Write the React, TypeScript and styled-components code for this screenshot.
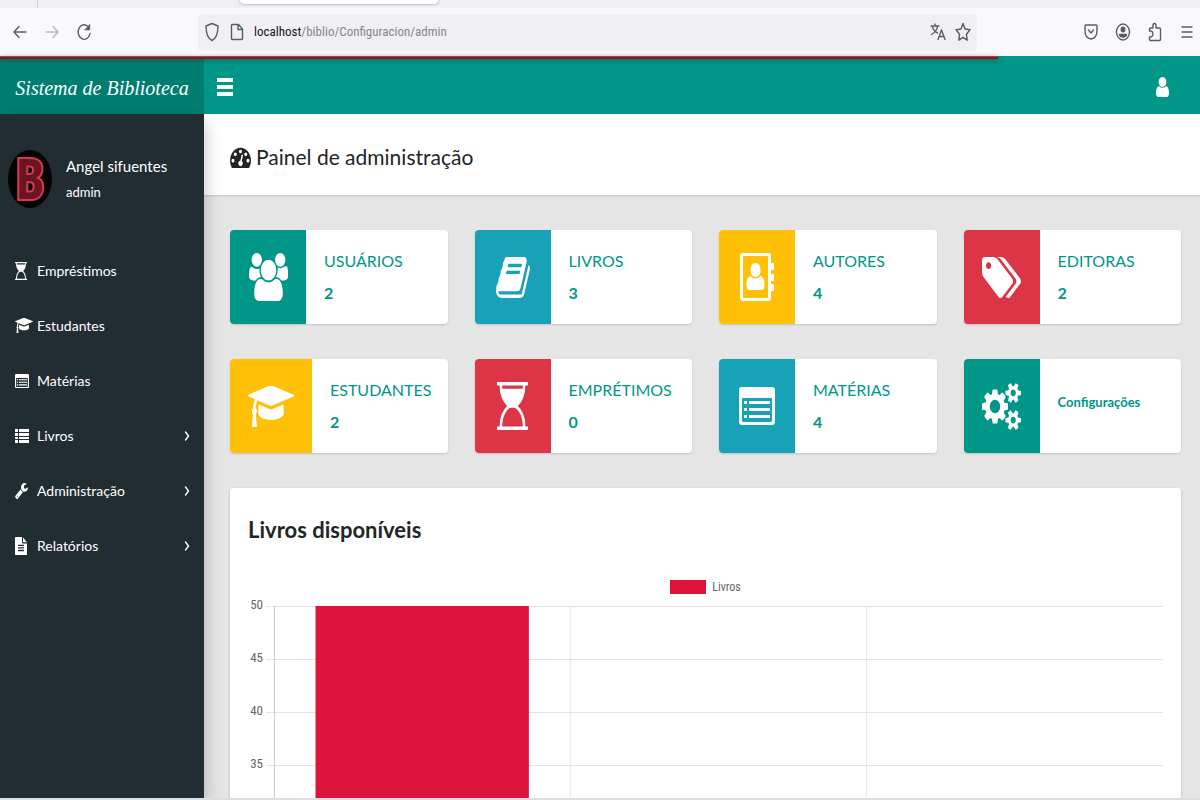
import React from 'react';
import styled, { createGlobalStyle } from 'styled-components';

const teal = '#009688';
const cyan = '#17a2b8';
const amber = '#ffc107';
const red = '#dc3545';
const crimson = '#dc143c';
const condensed = '"Roboto Condensed", "Liberation Sans", sans-serif';

const GlobalStyle = createGlobalStyle`
  *, *::before, *::after { box-sizing: border-box; }
  body { margin: 0; font-family: Lato, "Open Sans", sans-serif; color: #212529; background: #e5e5e5; }
  h1, h2, h3, p, ul { margin: 0; padding: 0; }
  ul { list-style: none; }
  a { color: inherit; text-decoration: none; }
  button { border: 0; padding: 0; background: none; color: inherit; font: inherit; cursor: pointer; }
  svg { display: block; flex: none; }
`;

const Window = styled.div`
  display: flex;
  flex-direction: column;
  height: 100vh;
  overflow: hidden;
  border-bottom: 2px solid #dcdee3;
`;

/* Browser chrome */

const TabStrip = styled.div`
  display: flex;
  flex: none;
  height: 8px;
  background: #f0f0f4;
`;

const TabDivider = styled.div`
  width: 38px;
  border-right: 1px solid #cfcfd8;
`;

const ActiveTab = styled.div`
  width: 198px;
  height: 4px;
  margin-left: 202px;
  background: #fff;
  border-radius: 0 0 4px 4px;
  box-shadow: 0 0 3px rgba(0, 0, 0, 0.4);
`;

const Toolbar = styled.div`
  display: flex;
  flex: none;
  align-items: center;
  height: 48px;
  padding: 0 5px 0 12px;
  background: #f9f9fb;
  color: #5b5b66;
`;

const ToolGroup = styled.div`
  display: flex;
  align-items: center;
  gap: 16px;
`;

const ToolButton = styled.button<{ $dim?: boolean }>`
  display: grid;
  place-items: center;
  width: 16px;
  height: 24px;
  opacity: ${p => (p.$dim ? 0.4 : 1)};
`;

const AddressBar = styled.div`
  display: flex;
  flex: 1;
  align-items: center;
  gap: 9px;
  height: 37px;
  margin: 0 106px;
  padding: 0 6px;
  border-radius: 4px;
  background: #f0f0f4;
`;

const Address = styled.div`
  flex: 1;
  font: 13px/20px ${condensed};
  color: #85858f;
  outline: none;
  b { font-weight: 400; color: #15141a; }
`;

/* Application shell */

const Page = styled.div`
  position: relative;
  display: grid;
  flex: 1;
  min-height: 0;
  grid-template-columns: 204px minmax(0, 1fr);
  grid-template-rows: 58px minmax(0, 1fr);
`;

const LoadBar = styled.div`
  position: absolute;
  z-index: 3;
  top: 0;
  left: 0;
  width: 998px;
  max-width: 100%;
  height: 3px;
  border-top: 1px solid #a8434a;
  background: #7d1d26;
  box-shadow: 0 1px 4px rgba(70, 30, 30, 0.5);
`;

const Brand = styled.a`
  display: flex;
  align-items: center;
  justify-content: center;
  padding-top: 6px;
  background: #007d71;
  color: #fff;
  font: italic 20px/32px "Liberation Serif", serif;
  white-space: nowrap;
`;

const TopBar = styled.header`
  display: flex;
  align-items: center;
  justify-content: space-between;
  padding: 4px 31px 0 13px;
  background: ${teal};
  color: #fff;
`;

const Sidebar = styled.aside`
  z-index: 2;
  padding-top: 33px;
  background: #222d32;
  color: #fff;
  box-shadow: 0 8px 17px rgba(0, 0, 0, 0.25);
`;

const Profile = styled.div`
  display: flex;
  align-items: center;
  gap: 14px;
  height: 64px;
  margin-bottom: 32px;
  padding-left: 8px;
`;

const ProfileName = styled.p`
  font-size: 15px;
  line-height: 26px;
`;

const ProfileRole = styled.p`
  font-size: 13px;
  line-height: 26px;
`;

const NavLink = styled.a`
  display: flex;
  align-items: center;
  height: 55px;
  padding: 0 14px 0 15px;
  font-size: 14px;
  line-height: 20px;
`;

const NavIcon = styled.span`
  display: flex;
  width: 22px;
`;

const NavLabel = styled.span`
  flex: 1;
`;

const Main = styled.main`
  overflow: hidden;
  background: #e5e5e5;
`;

const TitleBar = styled.div`
  display: flex;
  align-items: center;
  gap: 5px;
  height: 81px;
  padding: 4px 26px 0;
  background: #fff;
  box-shadow: 0 1px 2px rgba(0, 0, 0, 0.15);
`;

const Title = styled.h1`
  font-size: 21px;
  font-weight: 400;
  line-height: 32px;
`;

const Content = styled.div`
  display: flex;
  flex-direction: column;
  gap: 35px;
  padding: 35px 19px 35px 26px;
`;

const Cards = styled.div`
  display: grid;
  grid-template-columns: repeat(4, minmax(0, 1fr));
  gap: 35px 27px;
`;

const Card = styled.a`
  display: flex;
  height: 94px;
  overflow: hidden;
  border-radius: 4px;
  background: #fff;
  color: ${teal};
  box-shadow: 0 1px 2px rgba(0, 0, 0, 0.15);
`;

const CardIcon = styled.div<{ $tone: string }>`
  display: grid;
  flex: none;
  place-items: center;
  min-width: 76px;
  padding: 0 18px;
  background: ${p => p.$tone};
  color: #fff;
`;

const CardInfo = styled.div`
  display: flex;
  flex-direction: column;
  justify-content: center;
  padding-left: 18px;
`;

const CardTitle = styled.h3`
  font-size: 16px;
  font-weight: 400;
  line-height: 32px;
`;

const CardValue = styled.p<{ $small?: boolean }>`
  padding-bottom: ${p => (p.$small ? 8 : 0)}px;
  font-size: ${p => (p.$small ? 13 : 16)}px;
  font-weight: 700;
  line-height: 32px;
`;

const Tile = styled.section`
  padding: 24px 18px;
  border-radius: 3px;
  background: #fff;
  box-shadow: 0 1px 3px rgba(0, 0, 0, 0.2);
`;

const TileTitle = styled.h2`
  font-size: 22px;
  font-weight: 700;
  line-height: 36px;
`;

const Legend = styled.div`
  display: flex;
  align-items: center;
  justify-content: center;
  gap: 6px;
  height: 16px;
  margin-top: 31px;
  color: #666;
  font: 12px/16px ${condensed};
`;

const Swatch = styled.span`
  width: 36px;
  height: 14px;
  background: ${crimson};
`;

const Plot = styled.div`
  display: flex;
`;

const Axis = styled.div`
  width: 15px;
  color: #666;
  font: 13px/20px ${condensed};
  text-align: right;
`;

const Tick = styled.div`
  height: 53px;
`;

const Graph = styled.svg`
  flex: 1;
  min-width: 0;
  height: 224px;
  margin-left: 3px;
`;

/* Icons */

type GlyphProps = { w: number; h: number; box: string; d: string; evenOdd?: boolean };

const Glyph = ({ w, h, box, d, evenOdd }: GlyphProps) => (
  <svg width={w} height={h} viewBox={box} preserveAspectRatio="none" fill="currentColor" aria-hidden="true">
    <path d={d} fillRule={evenOdd ? 'evenodd' : 'nonzero'} />
  </svg>
);

const paths = {
  users:
    'M657 896q-162 5-265 128h-134q-82 0-138-40.5t-56-118.5q0-353 124-353 6 0 43.5 21t97.5 42.5 119 21.5q67 0 133-23-5 37-5 66 0 159 81 256zm1071 637q0 120-73 189.5t-194 69.5h-874q-121 0-194-69.5t-73-189.5q0-53 3.5-103.5t14-109 26.5-108.5 43-97.5 62-81 85.5-53.5 111.5-20q10 0 43 21.5t73 48 107 48 135 21.5 135-21.5 107-48 73-48 43-21.5q61 0 111.5 20t85.5 53.5 62 81 43 97.5 26.5 108.5 14 109 3.5 103.5zm-1024-1277q0 106-75 181t-181 75-181-75-75-181 75-181 181-75 181 75 75 181zm704 384q0 159-112.5 271.5t-271.5 112.5-271.5-112.5-112.5-271.5 112.5-271.5 271.5-112.5 271.5 112.5 112.5 271.5zm576 225q0 78-56 118.5t-138 40.5h-134q-103-123-265-128 93-128 93-287 0-29-5-66 66 23 133 23 59 0 119-21.5t97.5-42.5 43.5-21q124 0 124 353zm-128-609q0 106-75 181t-181 75-181-75-75-181 75-181 181-75 181 75 75 181z',
  book:
    'M1703 478q40 57 18 129l-275 906q-19 64-76.5 107.5t-122.5 43.5h-923q-77 0-148.5-53.5t-99.5-131.5q-24-67-2-127 0-4 3-27t4-37q1-8-3-21.5t-3-19.5q2-11 8-21t16.5-23.5 16.5-23.5q23-38 45-91.5t30-91.5q3-10 .5-30t-.5-28q3-11 17-28t17-23q21-36 42-92t25-90q1-9-2.5-32t.5-28q4-13 22-30.5t22-22.5q19-26 42.5-84.5t27.5-96.5q1-8-3-25.5t-2-26.5q2-8 9-18t18-23 17-21q8-12 16.5-30.5t15-35 16-36 19.5-32 26.5-23.5 36-11.5 47.5 5.5l-1 3q38-9 51-9h761q74 0 114 56t18 130l-274 906q-36 119-71.5 153.5t-128.5 34.5h-869q-27 0-38 15-11 16-1 43 24 70 144 70h923q29 0 56-15.5t35-41.5l300-987q7-22 5-57 38 15 59 43zm-1064 2q-4 13 2 22.5t20 9.5h608q13 0 25.5-9.5t16.5-22.5l21-64q4-13-2-22.5t-20-9.5h-608q-13 0-25.5 9.5t-16.5 22.5zm-83 256q-4 13 2 22.5t20 9.5h608q13 0 25.5-9.5t16.5-22.5l21-64q4-13-2-22.5t-20-9.5h-608q-13 0-25.5 9.5t-16.5 22.5z',
  tags:
    'M576 448q0-53-37.5-90.5t-90.5-37.5-90.5 37.5-37.5 90.5 37.5 90.5 90.5 37.5 90.5-37.5 37.5-90.5zm1067 576q0 53-37 90l-491 492q-39 37-91 37-53 0-90-37l-715-716q-38-37-64.5-101t-26.5-117v-416q0-52 38-90t90-38h416q53 0 117 26.5t102 64.5l715 714q37 39 37 91zm384 0q0 53-37 90l-491 492q-39 37-91 37-36 0-59-14t-53-45l470-470q37-37 37-90 0-52-37-91l-715-714q-38-38-102-64.5t-117-26.5h224q53 0 117 26.5t102 64.5l715 714q37 39 37 91z',
  cap:
    'M1774 836l18 316q4 69-82 128t-235 93.5-323 34.5-323-34.5-235-93.5-82-128l18-316 574 181q22 7 48 7t48-7zm530-324q0 23-22 31l-1120 352q-4 1-10 1t-10-1l-652-206q-43 34-71 111.5t-34 178.5q63 36 63 109 0 69-58 107l58 433q2 14-8 25-9 11-24 11h-192q-15 0-24-11-10-11-8-25l58-433q-58-38-58-107 0-73 65-111 11-207 98-330l-333-104q-22-8-22-31t22-31l1120-352q4-1 10-1t10 1l1120 352q22 8 22 31z',
  hourglass:
    'M1408 128q0 261-106.5 461.5t-266.5 306.5q160 106 266.5 306.5t106.5 461.5h96q14 0 23 9t9 23v64q0 14-9 23t-23 9h-1472q-14 0-23-9t-9-23v-64q0-14 9-23t23-9h96q0-261 106.5-461.5t266.5-306.5q-160-106-266.5-306.5t-106.5-461.5h-96q-14 0-23-9t-9-23v-64q0-14 9-23t23-9h1472q14 0 23 9t9 23v64q0 14-9 23t-23 9h-96zm-128 0h-1024q0 66 9 128h1006q9-61 9-128zm0 1536q0-130-34-249.5t-90.5-208-126.5-152-146-94.5h-230q-76 31-146 94.5t-126.5 152-90.5 208-34 249.5h1024z',
  cogs:
    'M896 896q0-106-75-181t-181-75-181 75-75 181 75 181 181 75 181-75 75-181zm768 512q0-52-38-90t-90-38-90 38-38 90q0 53 37.5 90.5t90.5 37.5 90.5-37.5 37.5-90.5zm0-1024q0-52-38-90t-90-38-90 38-38 90q0 53 37.5 90.5t90.5 37.5 90.5-37.5 37.5-90.5zm-384 421v185q0 10-7 19.5t-16 10.5l-155 24q-11 35-32 76 34 48 90 115 7 11 7 20 0 12-7 19-23 30-82.5 89.5t-78.5 59.5q-11 0-21-7l-115-90q-37 19-77 31-11 108-23 155-7 24-30 24h-186q-11 0-20-7.5t-10-17.5l-23-153q-34-10-75-31l-118 89q-7 7-20 7-11 0-21-8-144-133-144-160 0-9 7-19 10-14 41-53t47-61q-23-44-35-82l-152-24q-10-1-17-9.5t-7-19.5v-185q0-10 7-19.5t16-10.5l155-24q11-35 32-76-34-48-90-115-7-11-7-20 0-12 7-20 22-30 82-89t79-59q11 0 21 7l115 90q34-18 77-32 11-108 23-154 7-24 30-24h186q11 0 20 7.5t10 17.5l23 153q34 10 75 31l118-89q8-7 20-7 11 0 21 8 144 133 144 160 0 8-7 19-12 16-42 54t-45 60q23 48 34 82l152 23q10 2 17 10.5t7 19.5zm640 533v140q0 16-149 31-12 27-30 52 51 113 51 138 0 4-4 7-122 71-124 71-8 0-46-47t-52-68q-20 2-30 2t-30-2q-14 21-52 68t-46 47q-2 0-124-71-4-3-4-7 0-25 51-138-18-25-30-52-149-15-149-31v-140q0-16 149-31 13-29 30-52-51-113-51-138 0-4 4-7 4-2 35-20t59-34 30-16q8 0 46 46.5t52 67.5q20-2 30-2t30 2q51-71 92-112l6-2q4 0 124 70 4 3 4 7 0 25-51 138 17 23 30 52 149 15 149 31zm0-1024v140q0 16-149 31-12 27-30 52 51 113 51 138 0 4-4 7-122 71-124 71-8 0-46-47t-52-68q-20 2-30 2t-30-2q-14 21-52 68t-46 47q-2 0-124-71-4-3-4-7 0-25 51-138-18-25-30-52-149-15-149-31v-140q0-16 149-31 13-29 30-52-51-113-51-138 0-4 4-7 4-2 35-20t59-34 30-16q8 0 46 46.5t52 67.5q20-2 30-2t30 2q51-71 92-112l6-2q4 0 124 70 4 3 4 7 0 25-51 138 17 23 30 52 149 15 149 31z',
  user:
    'M1536 1399q0 109-62.5 187t-150.5 78h-854q-88 0-150.5-78t-62.5-187q0-85 8.5-160.5t31.5-152 58.5-131 94-89 134.5-34.5q131 128 313 128t313-128q76 0 134.5 34.5t94 89 58.5 131 31.5 152 8.5 160.5zm-256-887q0 159-112.5 271.5t-271.5 112.5-271.5-112.5-112.5-271.5 112.5-271.5 271.5-112.5 271.5 112.5 112.5 271.5z',
  gauge:
    'M384 1152q0-53-37.5-90.5t-90.5-37.5-90.5 37.5-37.5 90.5 37.5 90.5 90.5 37.5 90.5-37.5 37.5-90.5zm192-448q0-53-37.5-90.5t-90.5-37.5-90.5 37.5-37.5 90.5 37.5 90.5 90.5 37.5 90.5-37.5 37.5-90.5zm428 481l101-382q6-26-7.5-48.5t-38.5-29.5-48 6.5-30 39.5l-101 382q-60 5-107 43.5t-63 98.5q-20 77 20 146t117 89 146-20 89-117q16-60-6-117t-72-91zm660-33q0-53-37.5-90.5t-90.5-37.5-90.5 37.5-37.5 90.5 37.5 90.5 90.5 37.5 90.5-37.5 37.5-90.5zm-640-640q0-53-37.5-90.5t-90.5-37.5-90.5 37.5-37.5 90.5 37.5 90.5 90.5 37.5 90.5-37.5 37.5-90.5zm448 192q0-53-37.5-90.5t-90.5-37.5-90.5 37.5-37.5 90.5 37.5 90.5 90.5 37.5 90.5-37.5 37.5-90.5zm320 448q0 261-141 483-19 29-54 29h-1402q-35 0-54-29-141-221-141-483 0-182 71-348t191-286 286-191 348-71 348 71 286 191 191 286 71 348z',
  wrench:
    'M448 1472q0-26-19-45t-45-19-45 19-19 45 19 45 45 19 45-19 19-45zm644-420l-682 682q-37 37-90 37-52 0-91-37l-106-108q-38-36-38-90 0-53 38-91l681-681q39 98 114.5 173.5t173.5 114.5zm634-435q0 39-23 106-47 134-164.5 217.5t-258.5 83.5q-185 0-316.5-131.5t-131.5-316.5 131.5-316.5 316.5-131.5q58 0 121.5 16.5t107.5 46.5q16 11 16 28t-16 28l-293 169v224l193 107q5-3 79-48.5t135.5-81 70.5-35.5q15 0 23.5 10t8.5 25z',
  file:
    'M1596 476q14 14 28 36h-472v-472q22 14 36 28zm-476 164h544v1056q0 40-28 68t-68 28h-1344q-40 0-68-28t-28-68v-1600q0-40 28-68t68-28h800v544q0 40 28 68t68 28zm160 736v-64q0-14-9-23t-23-9h-704q-14 0-23 9t-9 23v64q0 14 9 23t23 9h704q14 0 23-9t9-23zm0-256v-64q0-14-9-23t-23-9h-704q-14 0-23 9t-9 23v64q0 14 9 23t23 9h704q14 0 23-9t9-23zm0-256v-64q0-14-9-23t-23-9h-704q-14 0-23 9t-9 23v64q0 14 9 23t23 9h704q14 0 23-9t9-23z',
  listAlt:
    'M3 0h30q3 0 3 3v32q0 3-3 3h-30q-3 0-3-3v-32q0-3 3-3zM4 11q-1 0-1 1v21q0 2 1 2h28q1 0 1-2v-21q0-1-1-1zM5 14h3v3h-3zM5 21h3v3h-3zM5 28h3v3h-3zM10 14h21v3h-21zM10 21h21v3h-21zM10 28h21v3h-21z',
  list:
    'M0 0h3v3h-3zM4 0h10v3h-10zM0 4h3v3h-3zM4 4h10v3h-10zM0 8h3v2h-3zM4 8h10v2h-10zM0 11h3v3h-3zM4 11h10v3h-10z',
  addressBook:
    'M3 0h25q3 0 3 3v7h2q1 0 1 1v5q0 1-1 1h-2v4h2q1 0 1 1v5q0 1-1 1h-2v3h2q1 0 1 1v5q0 1-1 1h-2v7q0 3-3 3h-25q-3 0-3-3v-42q0-3 3-3zM4 3q-1 0-1 1v40q0 1 1 1h23q1 0 1-1v-40q0-1-1-1zM15.500 10q5 0 5 7t-5 7-5-7 5-7zM10.500 23q2 2.500 5 2.500t5-2.500q4 1 4 9 0 5-3 5h-12q-3 0-3-5 0-8 4-9z',
};

const Line = ({ w = 16, h = 20, d, children }: { w?: number; h?: number; d?: string; children?: React.ReactNode }) => (
  <svg
    width={w}
    height={h}
    viewBox={`0 0 ${w} ${h}`}
    fill="none"
    stroke="currentColor"
    strokeWidth="1.4"
    strokeLinecap="round"
    strokeLinejoin="round"
    aria-hidden="true"
  >
    {d && <path d={d} />}
    {children}
  </svg>
);

const Avatar = () => (
  <svg width="44" height="58" viewBox="0 0 44 58" overflow="visible" role="img" aria-label="Angel sifuentes">
    <ellipse cx="22" cy="29" rx="22" ry="29" fill="#050304" />
    <text
      x="22"
      y="49"
      textAnchor="middle"
      fontFamily='"Open Sans Condensed", "Roboto Condensed", sans-serif'
      fontWeight="700"
      fontSize="56"
      fill="#6b1522"
      stroke="#d63a4b"
      strokeWidth="4"
      paintOrder="stroke"
    >
      B
    </text>
  </svg>
);

const Chevron = () => <Line w={6} h={10} d="M1.500 1 4.500 5 1.500 9" />;

const navItems = [
  { label: 'Empréstimos', icon: <Glyph w={12} h={18} box="0 0 1536 1792" d={paths.hourglass} /> },
  { label: 'Estudantes', icon: <Glyph w={18} h={15} box="0 160 2304 1504" d={paths.cap} /> },
  { label: 'Matérias', icon: <Glyph w={14} h={14} box="0 0 36 38" d={paths.listAlt} evenOdd /> },
  { label: 'Livros', icon: <Glyph w={14} h={14} box="0 0 14 14" d={paths.list} />, more: true },
  { label: 'Administração', icon: <Glyph w={13} h={16} box="64 128 1664 1644" d={paths.wrench} />, more: true },
  { label: 'Relatórios', icon: <Glyph w={12} h={18} box="128 0 1536 1792" d={paths.file} />, more: true },
];

const cards = [
  { title: 'USUÁRIOS', value: '2', tone: teal, icon: <Glyph w={39} h={48} box="64 0 1920 1792" d={paths.users} /> },
  { title: 'LIVROS', value: '3', tone: cyan, icon: <Glyph w={34} h={41} box="64 128 1666 1536" d={paths.book} /> },
  { title: 'AUTORES', value: '4', tone: amber, icon: <Glyph w={34} h={48} box="0 0 34 48" d={paths.addressBook} evenOdd /> },
  { title: 'EDITORAS', value: '2', tone: red, icon: <Glyph w={39} h={41} box="128 128 1900 1515" d={paths.tags} /> },
  { title: 'ESTUDANTES', value: '2', tone: amber, icon: <Glyph w={46} h={41} box="0 160 2304 1504" d={paths.cap} /> },
  { title: 'EMPRÉTIMOS', value: '0', tone: red, icon: <Glyph w={31} h={48} box="0 0 1536 1792" d={paths.hourglass} /> },
  { title: 'MATÉRIAS', value: '4', tone: cyan, icon: <Glyph w={36} h={38} box="0 0 36 38" d={paths.listAlt} evenOdd /> },
  { value: 'Configurações', tone: teal, icon: <Glyph w={39} h={47} box="0 10 1920 1772" d={paths.cogs} /> },
];

const ticks = [50, 45, 40, 35];

const BarChart = () => (
  <Plot>
    <Axis>
      {ticks.map(t => (
        <Tick key={t}>{t}</Tick>
      ))}
    </Axis>
    <Graph role="img" aria-label="Livros">
      {ticks.map((t, i) => (
        <line key={t} x1="0" x2="100%" y1={i * 53 + 11.5} y2={i * 53 + 11.5} stroke="#e3e3e3" />
      ))}
      <svg x="8" y="11" style={{ width: 'calc(100% - 8px)' }} height="213" overflow="visible">
        <line x1="0.5" x2="0.5" y1="0" y2="213" stroke="#c9c9c9" />
        <line x1="33.33%" x2="33.33%" y1="0" y2="213" stroke="#e6e6e6" />
        <line x1="66.66%" x2="66.66%" y1="0" y2="213" stroke="#e6e6e6" />
        <rect x="4.67%" y="0" width="24%" height="213" fill={crimson} />
      </svg>
    </Graph>
  </Plot>
);

export default function App() {
  return (
    <Window>
      <GlobalStyle />
      <TabStrip>
        <TabDivider />
        <ActiveTab />
      </TabStrip>
      <Toolbar>
        <ToolGroup>
          <ToolButton aria-label="Voltar">
            <Line d="M14 10H3M7 4.500 2 10l5 5.500" />
          </ToolButton>
          <ToolButton aria-label="Avançar" $dim>
            <Line d="M2 10h11M9 4.500 14 10l-5 5.500" />
          </ToolButton>
          <ToolButton aria-label="Recarregar">
            <Line d="M12.500 5A6 7.300 0 1 0 14 11.500">
              <path d="M13.800 2.500v5.500H9z" fill="currentColor" strokeWidth="0.600" />
            </Line>
          </ToolButton>
        </ToolGroup>
        <AddressBar>
          <ToolButton aria-label="Proteção">
            <Line d="M8 1.500 14 4c0 7-1 12-6 14.500C3 16 2 11 2 4z" />
          </ToolButton>
          <ToolButton aria-label="Informações do site">
            <Line d="M3.500 2.500h6l4 4.500v9.500q0 1-1 1h-9q-1 0-1-1v-13q0-1 1-1zM9 2.500V7.500h4.500" />
          </ToolButton>
          <Address role="textbox" aria-label="Endereço" tabIndex={0}>
            <b>localhost</b>/biblio/Configuracion/admin
          </Address>
          <ToolButton aria-label="Traduzir">
            <Line d="M1 4h8M5 2v2M2.500 4.500C3 8 5.500 10 7.500 11M7.500 4.500C7 8 4 11 1.500 12.500M8 17.500 11.500 8 15 17.500M9.200 14.500h4.600" />
          </ToolButton>
          <ToolButton aria-label="Favoritar">
            <Line d="M8 1.500 10 7l5 .8-3.600 4.400.8 6L8 15.300l-4.200 2.900.8-6L1 7.800 6 7z" />
          </ToolButton>
        </AddressBar>
        <ToolGroup>
          <ToolButton aria-label="Salvar no Pocket">
            <Line w={14} h={18} d="M2 2h10q1 0 1 1v5q0 7-6 8Q1 15 1 8V3q0-1 1-1zM4.500 7 7 10l2.500-3" />
          </ToolButton>
          <ToolButton aria-label="Conta">
            <Line>
              <ellipse cx="8" cy="10" rx="6.500" ry="8" />
              <ellipse cx="8" cy="7.500" rx="1.800" ry="2.200" fill="currentColor" />
              <path d="M4.500 12.500h7q-.5 2.500-3.500 2.500t-3.500-2.500z" fill="currentColor" />
            </Line>
          </ToolButton>
          <ToolButton aria-label="Extensões">
            <Line d="M2.500 9V7q0-1 1-1H6V3.500q0-2 1.500-2T9 3.500V6h3.500q1 0 1 1v10.500q0 1-1 1h-9q-1 0-1-1V15H4q2-.5 2-3T4 9z" />
          </ToolButton>
          <ToolButton aria-label="Menu">
            <Line d="M3 5h10M3 10h10M3 15h10" />
          </ToolButton>
        </ToolGroup>
      </Toolbar>
      <Page>
        <LoadBar />
        <Brand href="#">Sistema de Biblioteca</Brand>
        <TopBar>
          <button aria-label="Alternar menu">
            <Glyph w={16} h={18} box="0 0 16 18" d="M0 0h16v4h-16zM0 7h16v4h-16zM0 14h16v4h-16z" />
          </button>
          <button aria-label="Usuário">
            <Glyph w={13} h={20} box="256 128 1280 1536" d={paths.user} />
          </button>
        </TopBar>
        <Sidebar>
          <Profile>
            <Avatar />
            <div>
              <ProfileName>Angel sifuentes</ProfileName>
              <ProfileRole>admin</ProfileRole>
            </div>
          </Profile>
          <nav>
            <ul>
              {navItems.map(item => (
                <li key={item.label}>
                  <NavLink href="#">
                    <NavIcon>{item.icon}</NavIcon>
                    <NavLabel>{item.label}</NavLabel>
                    {item.more && <Chevron />}
                  </NavLink>
                </li>
              ))}
            </ul>
          </nav>
        </Sidebar>
        <Main>
          <TitleBar>
            <Glyph w={21} h={22} box="0 128 1792 1536" d={paths.gauge} />
            <Title>Painel de administração</Title>
          </TitleBar>
          <Content>
            <Cards>
              {cards.map(card => (
                <Card href="#" key={card.title ?? card.value}>
                  <CardIcon $tone={card.tone}>{card.icon}</CardIcon>
                  <CardInfo>
                    {card.title && <CardTitle>{card.title}</CardTitle>}
                    <CardValue $small={!card.title}>{card.value}</CardValue>
                  </CardInfo>
                </Card>
              ))}
            </Cards>
            <Tile>
              <TileTitle>Livros disponíveis</TileTitle>
              <Legend>
                <Swatch />
                Livros
              </Legend>
              <BarChart />
            </Tile>
          </Content>
        </Main>
      </Page>
    </Window>
  );
}
